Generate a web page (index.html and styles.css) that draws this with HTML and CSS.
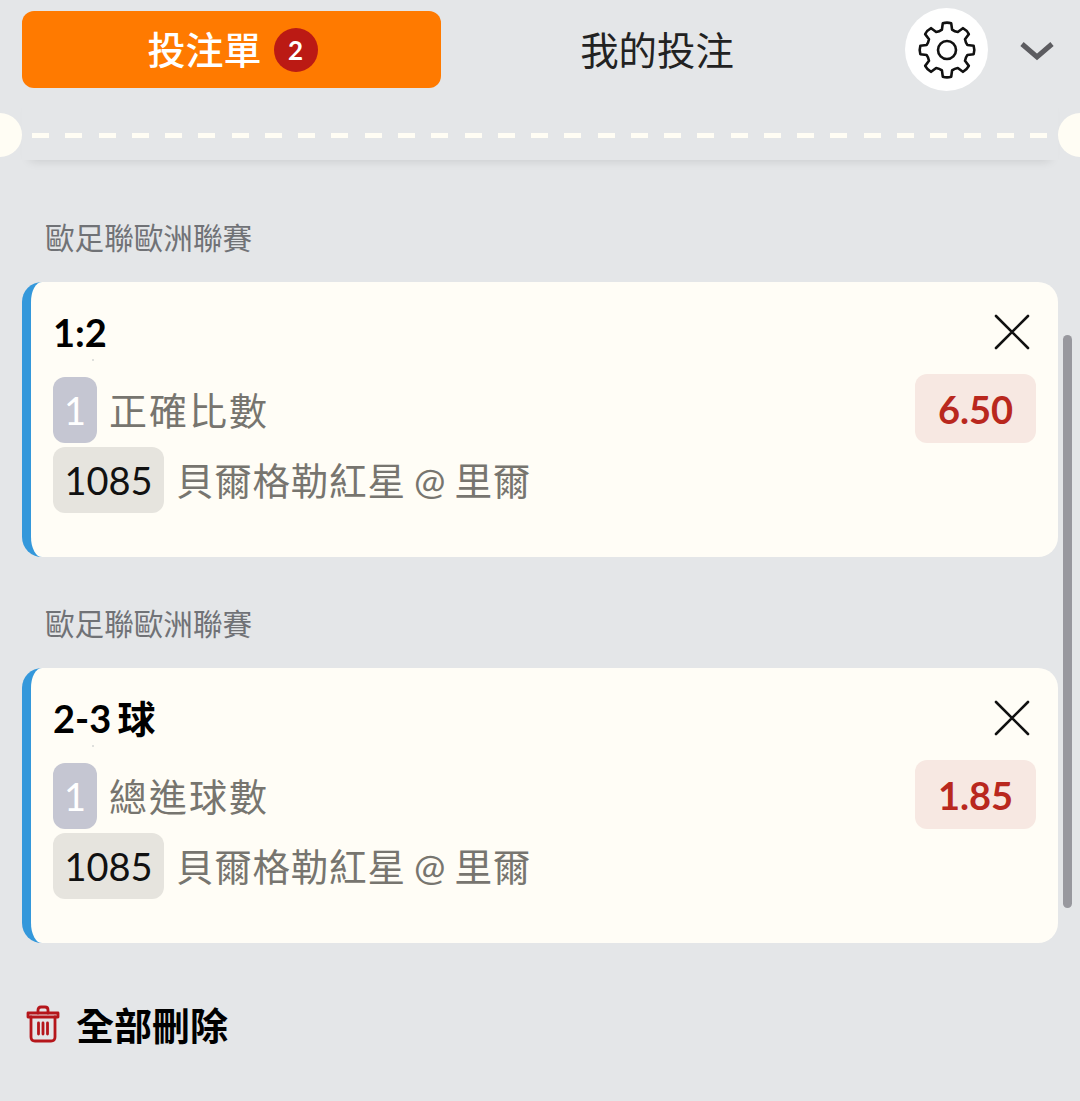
FILE: index.html
```html
<!DOCTYPE html>
<html lang="zh-Hant">
<head>
	<meta charset="UTF-8">
	<title>投注單</title>
	<link rel="stylesheet" href="styles.css">
</head>
<body>
	<div class="tabs">
		<div class="tab-active"><span class="tab-label">投注單</span><span class="count">2</span></div>
		<div class="tab"><span class="tab-label">我的投注</span></div>
		<div class="gear">
			<svg width="60" height="60" viewBox="-2 -2 60 60" fill="none" stroke="#111" stroke-width="2.6" stroke-linejoin="round">
				<path d="M32.22 1.33L33.08 7.62Q35.65 9.52 38.82 10L43.87 6.16Q47.8 8.2 49.84 12.13L46 17.18Q46.48 20.35 48.38 22.92L54.67 23.78Q56 28 54.67 32.22L48.38 33.08Q46.48 35.65 46 38.82L49.84 43.87Q47.8 47.8 43.87 49.84L38.82 46Q35.65 46.48 33.08 48.38L32.22 54.67Q28 56 23.78 54.67L22.92 48.38Q20.35 46.48 17.18 46L12.13 49.84Q8.2 47.8 6.16 43.87L10 38.82Q9.52 35.65 7.62 33.08L1.33 32.22Q0 28 1.33 23.78L7.62 22.92Q9.52 20.35 10 17.18L6.16 12.13Q8.2 8.2 12.13 6.16L17.18 10Q20.35 9.52 22.92 7.62L23.78 1.33Q28 0 32.22 1.33Z"/>
				<circle cx="28" cy="28" r="9"/>
			</svg>
		</div>
		<svg class="chevron" width="34" height="20" viewBox="0 0 34 20" fill="none" stroke="#5c5c60" stroke-width="5">
			<path d="M2 3L17 16L32 3"/>
		</svg>
	</div>

	<div class="ticket-edge">
		<span class="notch notch-left"></span>
		<div class="dashes"></div>
		<span class="notch notch-right"></span>
	</div>

	<div class="scrollbar"></div>

	<div class="section section-first">
		<div class="league">歐足聯歐洲聯賽</div>
		<div class="card">
			<div class="card-title">
				<span class="pick">1:2</span>
				<svg class="close" width="36" height="36" viewBox="0 0 36 36" stroke="#111" stroke-width="2.6" stroke-linecap="round">
					<path d="M2 2L34 34M34 2L2 34"/>
				</svg>
			</div>
			<div class="selection">
				<div class="selection-name"><span class="num">1</span><span class="bet-type">正確比數</span></div>
				<div class="odds">6.50</div>
			</div>
			<div class="match"><span class="code">1085</span><span class="teams">貝爾格勒紅星 @ 里爾</span></div>
		</div>
	</div>

	<div class="section">
		<div class="league">歐足聯歐洲聯賽</div>
		<div class="card">
			<div class="card-title">
				<span class="pick">2-3 球</span>
				<svg class="close" width="36" height="36" viewBox="0 0 36 36" stroke="#111" stroke-width="2.6" stroke-linecap="round">
					<path d="M2 2L34 34M34 2L2 34"/>
				</svg>
			</div>
			<div class="selection">
				<div class="selection-name"><span class="num">1</span><span class="bet-type">總進球數</span></div>
				<div class="odds">1.85</div>
			</div>
			<div class="match"><span class="code">1085</span><span class="teams">貝爾格勒紅星 @ 里爾</span></div>
		</div>
	</div>

	<div class="delete-all">
		<svg width="34" height="38" viewBox="0 0 34 38" fill="none" stroke="#b5161b" stroke-width="2.8" stroke-linejoin="round" stroke-linecap="round">
			<path d="M12 8V5Q12 2 15 2H19Q22 2 22 5V8"/>
			<path d="M2 8H32V12H2Z"/>
			<path d="M5 12V32Q5 36 9 36H25Q29 36 29 32V12"/>
			<path d="M12.5 18V29M17 18V29M21.5 18V29"/>
		</svg>
		<span class="delete-label">全部刪除</span>
	</div>
</body>
</html>
```

FILE: styles.css
```css
*{
	margin:0px;
	padding:0px;
	box-sizing:border-box;
}
html,body{
	height:1101px;
	overflow:hidden;
}
body{
	position:relative;
	padding-top:8px;
	background:#e4e6e8;
	font-family:"Lato","Noto Sans CJK TC",sans-serif;
}
.tabs{
	display:flex;
	align-items:center;
	height:83px;
	padding-left:22px;
}
.tab-active{
	display:flex;
	align-items:center;
	justify-content:center;
	width:419px;
	height:77px;
	background:#ff7a00;
	border-radius:12px;
	color:#fff;
	font-size:38px;
	font-weight:500;
}
.tab-label{
	margin-bottom:4px;
}
.tab-active .tab-label{
	margin-left:2px;
}
.count{
	display:flex;
	align-items:center;
	justify-content:center;
	width:44px;
	height:44px;
	margin-left:12px;
	background:#bb1a14;
	border-radius:50%;
	font-size:26px;
	font-weight:700;
}
.tab{
	display:flex;
	justify-content:center;
	width:434px;
	padding-right:2px;
	color:#222;
	font-size:38.4px;
	font-weight:400;
}
.gear{
	display:flex;
	align-items:center;
	justify-content:center;
	width:83px;
	height:83px;
	margin-left:30px;
	background:#fff;
	border-radius:50%;
}
.chevron{
	margin-left:32px;
	margin-top:3px;
}
.ticket-edge{
	position:relative;
	height:69px;
	margin:0px 22px;
	padding-top:42px;
	box-shadow:0px 8px 10px -8px rgba(0,0,0,0.14);
}
.dashes{
	height:5px;
	margin:0px 11px 0px 10px;
	background:repeating-linear-gradient(90deg,#fffdf4 0px,#fffdf4 17px,transparent 17px,transparent 33.27px);
}
.notch{
	position:absolute;
	top:22px;
	width:44px;
	height:44px;
	background:#fffdf4;
	border-radius:50%;
}
.notch-left{
	left:-44px;
}
.notch-right{
	right:-44px;
}
.scrollbar{
	position:absolute;
	top:335px;
	left:1063px;
	width:9px;
	height:573px;
	background:#98989e;
	border-radius:5px;
}
.section{
	margin:47px 22px 0px;
}
.section-first{
	margin-top:58px;
}
.league{
	height:40px;
	line-height:40px;
	margin-bottom:24px;
	padding-left:23px;
	color:#707276;
	font-size:29.6px;
	font-weight:400;
}
.card{
	height:275px;
	padding:30px 22px 0px 22px;
	background:#fffdf6;
	border-left:9px solid #3498db;
	border-radius:20px;
}
.card-title{
	position:relative;
	display:flex;
	align-items:center;
	justify-content:space-between;
	height:44px;
	margin-bottom:18px;
	color:#000;
	font-size:38px;
	font-weight:700;
}
/* small speck under the pick in the original */
.card-title::after{
	content:"";
	position:absolute;
	left:39px;
	bottom:-5px;
	width:2px;
	height:2px;
	background:#d4d6d4;
	border-radius:50%;
}
.pick{
	height:44px;
	line-height:40px;
	word-spacing:-3px;
}
.close{
	margin-right:6px;
	margin-top:-4px;
}
.selection{
	display:flex;
	align-items:flex-end;
	justify-content:space-between;
}
.selection-name,.match{
	display:flex;
	align-items:center;
}
.num{
	display:flex;
	align-items:center;
	justify-content:center;
	width:44px;
	height:66px;
	background:#c5c6d2;
	border-radius:12px;
	color:#fff;
	font-size:38px;
}
.bet-type,.teams{
	color:#77756f;
	font-size:38px;
	font-weight:400;
	margin-bottom:4px;
}
.bet-type{
	margin-left:12px;
	letter-spacing:2px;
}
.odds{
	width:121px;
	height:69px;
	line-height:71px;
	text-align:center;
	background:#f7e8e2;
	border-radius:12px;
	color:#b9281e;
	font-size:38px;
	font-weight:700;
}
.match{
	margin-top:4px;
}
.code{
	display:flex;
	align-items:center;
	justify-content:center;
	width:111px;
	height:66px;
	background:#e6e4de;
	border-radius:12px;
	color:#111;
	font-size:38px;
}
.teams{
	margin-left:12px;
	font-size:37.6px;
	letter-spacing:0.7px;
	word-spacing:-2px;
}
.delete-all{
	display:flex;
	align-items:center;
	height:48px;
	margin-top:57px;
	padding-left:26px;
	color:#000;
	font-size:38px;
	font-weight:700;
}
.delete-label{
	margin-left:16px;
	margin-bottom:2px;
}
```
